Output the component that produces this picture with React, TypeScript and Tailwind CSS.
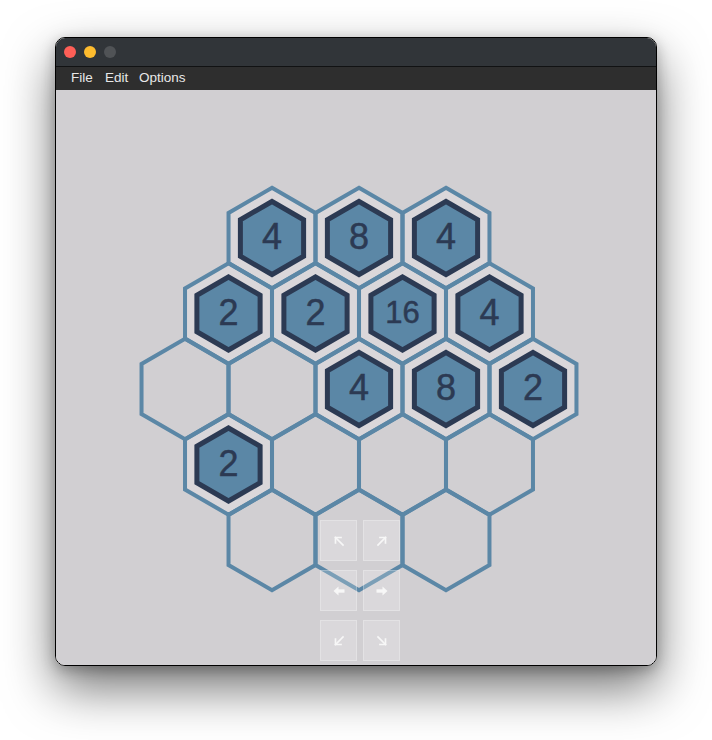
import React from "react";

const ROWS: number[][] = [
  [4, 8, 4],
  [2, 2, 16, 4],
  [0, 0, 4, 8, 2],
  [2, 0, 0, 0],
  [0, 0, 0],
];

const CX = 359;
const CY = 389;
const DX = 87;
const DY = 75.5;

function hexPts(cx: number, cy: number, r: number): string {
  const pts: string[] = [];
  for (let i = 0; i < 6; i++) {
    const a = ((-90 + 60 * i) * Math.PI) / 180;
    pts.push(`${(cx + r * Math.cos(a)).toFixed(2)},${(cy + r * Math.sin(a)).toFixed(2)}`);
  }
  return pts.join(" ");
}

type Cell = { x: number; y: number; v: number; key: string };

const cells: Cell[] = [];
ROWS.forEach((row, ri) => {
  const n = row.length;
  row.forEach((v, ci) => {
    cells.push({
      x: CX + (ci - (n - 1) / 2) * DX,
      y: CY + (ri - 2) * DY,
      v,
      key: `${ri}-${ci}`,
    });
  });
});

function Board() {
  return (
    <svg width={600} height={575} viewBox="56 90 600 575" className="block">
      {cells
        .filter((c) => c.v > 0)
        .map((c) => (
          <polygon key={"g" + c.key} points={hexPts(c.x, c.y, 48)} fill="#dad7da" />
        ))}
      {cells.map((c) => (
        <polygon
          key={"o" + c.key}
          points={hexPts(c.x, c.y, 50.2)}
          fill="none"
          stroke="#5b87a6"
          strokeWidth={4}
        />
      ))}
      {cells
        .filter((c) => c.v > 0)
        .map((c) => {
          const two = c.v >= 10;
          const fs = two ? 31 : 36;
          return (
            <g key={"t" + c.key}>
              <polygon
                points={hexPts(c.x, c.y, 36.5)}
                fill="#5b87a6"
                stroke="#2c3a53"
                strokeWidth={5}
              />
              <text
                x={c.x}
                y={c.y + (two ? 9.8 : 11)}
                textAnchor="middle"
                fontFamily="'Liberation Sans', Arial, sans-serif"
                fontSize={fs}
                fill="#2c3a53"
                stroke="#2c3a53"
                strokeWidth={0.5}
              >
                {c.v}
              </text>
            </g>
          );
        })}
    </svg>
  );
}

function Diag({ dir }: { dir: "nw" | "ne" | "sw" | "se" }) {
  const rot = { nw: 0, ne: 90, se: 180, sw: 270 }[dir];
  return (
    <svg width={12} height={12} viewBox="0 0 12 12">
      <g transform={`rotate(${rot} 6 6)`} stroke="#f7f7f7" strokeWidth={1.7} fill="none" strokeLinecap="square">
        <line x1={2.5} y1={2.5} x2={10} y2={10} />
        <polyline points="2.5,8 2.5,2.5 8,2.5" />
      </g>
    </svg>
  );
}

function Horiz({ dir }: { dir: "l" | "r" }) {
  return (
    <svg width={12} height={10} viewBox="0 0 12 10">
      <g transform={dir === "r" ? "rotate(180 6 5)" : undefined} fill="#f7f7f7">
        <polygon points="0.5,5 5.5,0.5 5.5,9.5" />
        <rect x={5} y={3.3} width={6.5} height={3.4} />
      </g>
    </svg>
  );
}

function Btn({ children }: { children: React.ReactNode }) {
  return (
    <div className="w-[37px] h-[41px] bg-white/20 border border-white/25 flex items-center justify-center">
      {children}
    </div>
  );
}

export default function App() {
  return (
    <div className="w-[712px] h-[740px] bg-white overflow-hidden pt-[37px] pl-[55px]">
      <div className="w-[602px] h-[629px] rounded-[10px] border border-black overflow-hidden flex flex-col shadow-[0_22px_50px_rgba(0,0,0,0.55),0_4px_14px_rgba(0,0,0,0.25)]">
        <div className="h-[28px] bg-[#313539] flex items-center pl-[8px] gap-[8px] shrink-0">
          <div className="w-[12px] h-[12px] rounded-full bg-[#fe5f57]" />
          <div className="w-[12px] h-[12px] rounded-full bg-[#febc2e]" />
          <div className="w-[12px] h-[12px] rounded-full bg-[#505356]" />
        </div>
        <div className="h-[1px] bg-[#111213] shrink-0" />
        <div
          className="h-[23px] bg-[#2e2e2e] flex items-center pl-[15px] text-[13.5px] text-[#e8e8e8] shrink-0"
          style={{ fontFamily: "'Liberation Sans', Arial, sans-serif" }}
        >
          <span className="w-[34px]">File</span>
          <span className="w-[34px]">Edit</span>
          <span>Options</span>
        </div>
        <div className="relative flex-1 bg-[#d1cfd2]">
          <Board />
          <div className="absolute left-[264px] top-[430px] grid grid-cols-2 gap-x-[6px] gap-y-[9px]">
            <Btn>
              <Diag dir="nw" />
            </Btn>
            <Btn>
              <Diag dir="ne" />
            </Btn>
            <Btn>
              <Horiz dir="l" />
            </Btn>
            <Btn>
              <Horiz dir="r" />
            </Btn>
            <Btn>
              <Diag dir="sw" />
            </Btn>
            <Btn>
              <Diag dir="se" />
            </Btn>
          </div>
        </div>
      </div>
    </div>
  );
}
